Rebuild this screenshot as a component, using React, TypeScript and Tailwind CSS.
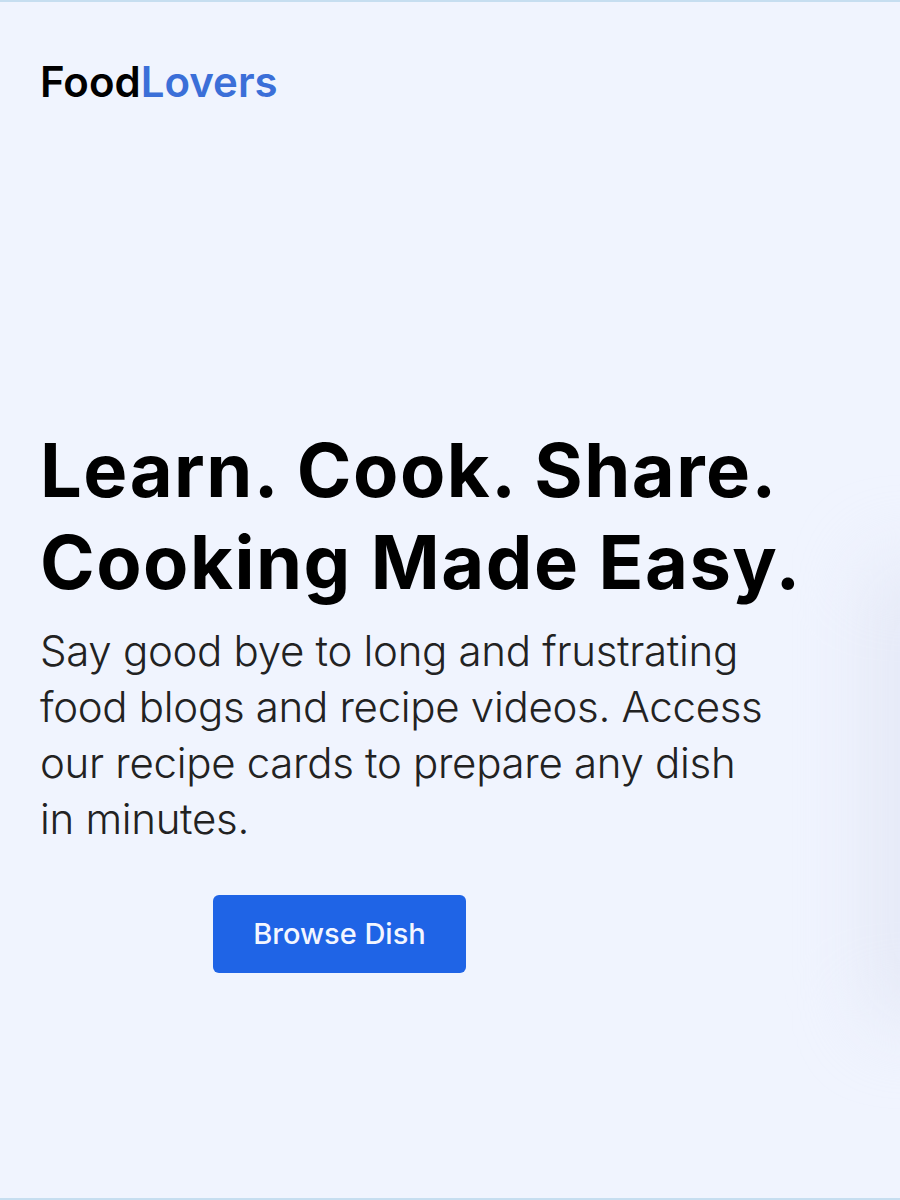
export default function App() {
  return (
    <div
      className="relative h-[1200px] w-[900px] overflow-hidden border-y-2 border-y-[#c6def0] bg-[#f0f4fe] text-black"
      style={{ fontFamily: 'Inter, "Open Sans", sans-serif' }}
    >
      {/* faint edge shadow on the right */}
      <div className="absolute right-[-40px] top-[560px] h-[460px] w-[60px] rounded-full bg-[#dfe3f3] blur-2xl" />

      <div className="relative flex flex-col px-10 pt-[59px]">
        <div className="text-[42px] font-semibold leading-none tracking-[0px]">
          Food<span className="text-[#3b6fd8]">Lovers</span>
        </div>

        <h1 className="mt-[321px] text-[74px] font-bold leading-[92px] tracking-[1.5px]">
          Learn. Cook. Share.
          <br />
          Cooking Made Easy.
        </h1>

        <p className="mt-[15px] whitespace-nowrap text-[42px] font-light leading-[56px] tracking-[-0.3px] text-[#222]">
          Say good bye to long and frustrating
          <br />
          food blogs and recipe videos. Access
          <br />
          our recipe cards to prepare any dish
          <br />
          in minutes.
        </p>

        <div className="mt-[48px] pl-[173px]">
          <button className="flex h-[78px] w-[253px] items-center justify-center rounded-md bg-[#1f64e6] text-[29px] font-medium text-[#f3f6ff]">
            Browse Dish
          </button>
        </div>
      </div>
    </div>
  )
}
